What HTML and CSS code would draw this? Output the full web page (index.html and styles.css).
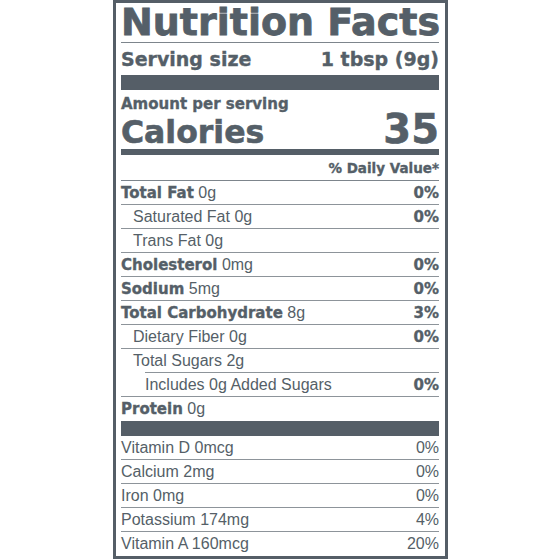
FILE: index.html
```html
<!DOCTYPE html>
<html>
<head>
<meta charset="utf-8">
<link rel="stylesheet" href="styles.css">
</head>
<body>
<div class="label">
  <div class="title">Nutrition Facts</div>
  <div class="serving"><span>Serving size</span><span>1 tbsp (9g)</span></div>
  <div class="bar thick"></div>
  <div class="amount">Amount per serving</div>
  <div class="calories"><span>Calories</span><span class="cal-num">35</span></div>
  <div class="bar medium"></div>
  <div class="dv">% Daily Value*</div>
  <div class="row"><span><b>Total Fat</b> 0g</span><b>0%</b></div>
  <div class="row ind1"><span>Saturated Fat 0g</span><b>0%</b></div>
  <div class="row ind1"><span>Trans Fat 0g</span></div>
  <div class="row"><span><b>Cholesterol</b> 0mg</span><b>0%</b></div>
  <div class="row"><span><b>Sodium</b> 5mg</span><b>0%</b></div>
  <div class="row"><span><b>Total Carbohydrate</b> 8g</span><b>3%</b></div>
  <div class="row ind1"><span>Dietary Fiber 0g</span><b>0%</b></div>
  <div class="row ind1 line-ind2"><span>Total Sugars 2g</span></div>
  <div class="row ind2"><span>Includes 0g Added Sugars</span><b>0%</b></div>
  <div class="row last"><span><b>Protein</b> 0g</span></div>
  <div class="bar thick"></div>
  <div class="row vit"><span>Vitamin D 0mcg</span><span>0%</span></div>
  <div class="row vit"><span>Calcium 2mg</span><span>0%</span></div>
  <div class="row vit"><span>Iron 0mg</span><span>0%</span></div>
  <div class="row vit"><span>Potassium 174mg</span><span>4%</span></div>
  <div class="row vit last"><span>Vitamin A 160mcg</span><span>20%</span></div>
</div>
</body>
</html>
```
FILE: styles.css
```css
html, body {
  margin: 0;
  padding: 0;
  background: #ffffff;
}
body {
  font-family: "Liberation Sans", Arial, sans-serif;
  color: #555f68;
}
.label {
  box-sizing: border-box;
  width: 335px;
  margin-left: 113px;
  border: 3px solid #555e67;
  padding: 0 6px 0 5px;
}
b, .title, .serving, .amount, .calories, .dv {
  font-family: "DejaVu Sans", "Liberation Sans", sans-serif;
  font-weight: bold;
  -webkit-text-stroke: 0.35px #555f68;
}
.title {
  height: 39px;
  font-size: 38px;
  line-height: 39px;
  -webkit-text-stroke: 0.8px #555f68;
  border-bottom: 1px solid #7d858c;
  white-space: nowrap;
}
.serving {
  height: 32px;
  display: flex;
  justify-content: space-between;
  align-items: center;
  font-size: 19px;
}
.bar {
  background: #555e67;
}
.bar.thick { height: 15px; }
.bar.medium { height: 6px; }
.amount {
  font-size: 15px;
  height: 26px;
  line-height: 28px;
}
.calories {
  height: 33px;
  display: flex;
  justify-content: space-between;
  align-items: baseline;
  font-size: 31.5px;
  line-height: 26px;
  -webkit-text-stroke: 0.6px #555f68;
}
.cal-num {
  font-size: 40px;
}
.dv {
  height: 25px;
  line-height: 27px;
  text-align: right;
  font-size: 13.5px;
  border-bottom: 1px solid #7d858c;
}
.row {
  box-sizing: border-box;
  height: 24px;
  display: flex;
  justify-content: space-between;
  align-items: center;
  font-size: 16px;
  border-bottom: 1px solid #8d949a;
  white-space: nowrap;
}
.row b {
  font-size: 15px;
}
.row.ind1 { padding-left: 12px; }
.row.ind2 { padding-left: 24px; }
.row.line-ind2 {
  border-bottom: none;
  background: linear-gradient(#8d949a, #8d949a) no-repeat right bottom / calc(100% - 24px) 1px;
}
.row.last { border-bottom: none; }
```
